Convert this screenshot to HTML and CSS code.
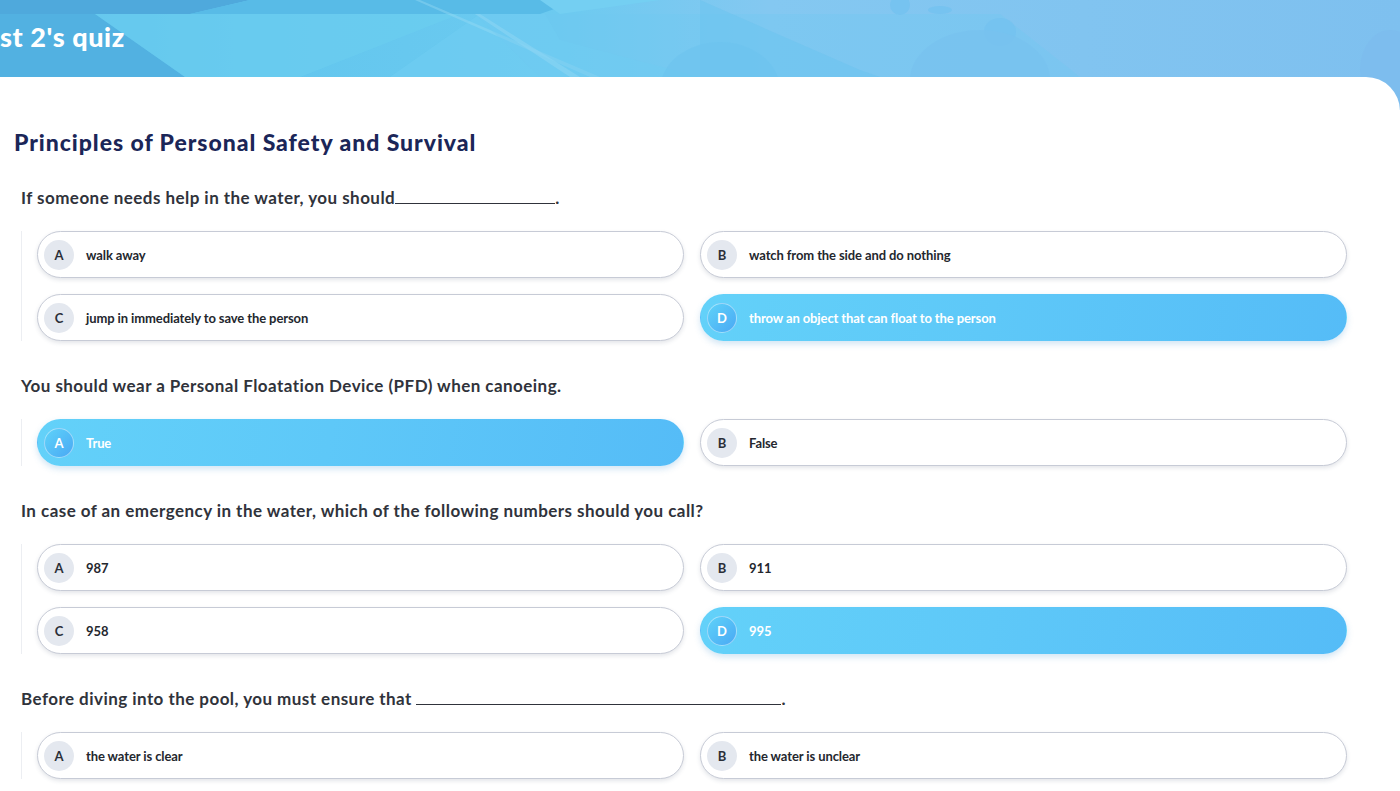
FILE: index.html
```html
<!DOCTYPE html>
<html lang="en">
<head>
<meta charset="utf-8">
<title>Quiz</title>
<link rel="stylesheet" href="styles.css">
</head>
<body>
<header class="banner">
  <svg class="banner-art" width="1400" height="110" viewBox="0 0 1400 110" preserveAspectRatio="none" aria-hidden="true">
    <rect x="0" y="0" width="1400" height="110" fill="url(#bg)"/>
    <defs>
      <linearGradient id="bg" x1="0" y1="0" x2="1" y2="0">
        <stop offset="0" stop-color="#55b7e5"/>
        <stop offset="0.18" stop-color="#62c6ee"/>
        <stop offset="0.4" stop-color="#6ccaf0"/>
        <stop offset="0.55" stop-color="#84c8f1"/>
        <stop offset="1" stop-color="#7ec0ef"/>
      </linearGradient>
    </defs>
    <polygon points="0,0 250,0 190,14 0,14" fill="#4fa9dc"/>
    <polygon points="0,14 95,14 185,77 0,77" fill="#52b1e1"/>
    <polygon points="95,14 460,14 300,77 185,77" fill="#6bcdf0" opacity="0.7"/>
    <polygon points="250,0 580,0 540,14 190,14" fill="#58bbe7"/>
    <polygon points="480,14 545,14 560,40 700,77 390,77" fill="#70cdf1" opacity="0.6"/>
    <polygon points="475,14 480,14 580,77 570,77" fill="#9adcf5" opacity="0.6"/>
    <polygon points="415,0 420,0 600,77 590,77" fill="#9adcf5" opacity="0.4"/>
    <polygon points="475,14 1000,14 1080,77 540,77" fill="#6fc9f0" opacity="0.35"/>
    <polygon points="700,0 860,70 880,77 700,77" fill="#6ac4ef" opacity="0.5"/>
    <polygon points="540,0 660,0 560,14" fill="#74cff2"/>
    <ellipse cx="1000" cy="32" rx="16" ry="14" fill="#74c2ef" opacity="0.9"/>
    <ellipse cx="900" cy="5" rx="10" ry="10" fill="#74c2ef" opacity="0.9"/>
    <ellipse cx="940" cy="10" rx="12" ry="4" fill="#74c2ef" opacity="0.9"/>
    <ellipse cx="980" cy="80" rx="70" ry="50" fill="#78c2ef" opacity="0.8"/>
    <ellipse cx="720" cy="90" rx="60" ry="48" fill="#6dc3ef" opacity="0.6"/>
    <ellipse cx="1390" cy="70" rx="30" ry="40" fill="#7dbcee" opacity="0.8"/>
  </svg>
  <h1 class="quiz-title">st 2's quiz</h1>
</header>

<main class="card">
  <h2 class="section-title">Principles of Personal Safety and Survival</h2>

  <section class="question">
    <p class="q-text">If someone needs help in the water, you should<span class="blank blank-short"></span>.</p>
    <div class="options">
      <div class="option"><span class="letter">A</span><span class="label">walk away</span></div>
      <div class="option"><span class="letter">B</span><span class="label">watch from the side and do nothing</span></div>
      <div class="option"><span class="letter">C</span><span class="label">jump in immediately to save the person</span></div>
      <div class="option selected"><span class="letter">D</span><span class="label">throw an object that can float to the person</span></div>
    </div>
  </section>

  <section class="question">
    <p class="q-text">You should wear a Personal Floatation Device (PFD) when canoeing.</p>
    <div class="options">
      <div class="option selected"><span class="letter">A</span><span class="label">True</span></div>
      <div class="option"><span class="letter">B</span><span class="label">False</span></div>
    </div>
  </section>

  <section class="question">
    <p class="q-text">In case of an emergency in the water, which of the following numbers should you call?</p>
    <div class="options">
      <div class="option"><span class="letter">A</span><span class="label">987</span></div>
      <div class="option"><span class="letter">B</span><span class="label">911</span></div>
      <div class="option"><span class="letter">C</span><span class="label">958</span></div>
      <div class="option selected"><span class="letter">D</span><span class="label">995</span></div>
    </div>
  </section>

  <section class="question">
    <p class="q-text">Before diving into the pool, you must ensure that <span class="blank blank-long"></span>.</p>
    <div class="options">
      <div class="option"><span class="letter">A</span><span class="label">the water is clear</span></div>
      <div class="option"><span class="letter">B</span><span class="label">the water is unclear</span></div>
    </div>
  </section>
</main>
</body>
</html>
```

FILE: styles.css
```css
* { box-sizing: border-box; }

html, body {
  margin: 0;
  padding: 0;
  height: 791px;
  overflow: hidden;
  background: #ffffff;
  font-family: Lato, Roboto, "Noto Sans", "Liberation Sans", sans-serif;
}

.banner {
  position: relative;
  height: 110px;
  margin-bottom: -33px;
  overflow: hidden;
}

.banner-art {
  position: absolute;
  left: 0;
  top: 0;
  display: block;
}

.quiz-title {
  position: relative;
  margin: 0;
  padding: 20px 0 0 0;
  color: #ffffff;
  font-size: 27px;
  font-weight: 900;
  line-height: 34px;
  letter-spacing: 0.6px;
}

.card {
  position: relative;
  background: #ffffff;
  border-top-right-radius: 34px;
  padding: 50px 53px 40px 14px;
}

.section-title {
  margin: 0;
  font-size: 23px;
  line-height: 30px;
  font-weight: 900;
  color: #1b2658;
  letter-spacing: 0.95px;
}

.question {
  margin-top: 34px;
}

.section-title + .question {
  margin-top: 30px;
}

.q-text {
  margin: 0 0 22px 7px;
  font-size: 17px;
  line-height: 22px;
  font-weight: 700;
  color: #30333b;
  letter-spacing: 0.45px;
}

.blank {
  display: inline-block;
  border-bottom: 1.5px solid #30333b;
  height: 17px;
  vertical-align: baseline;
}

.blank-short { width: 160px; }
.blank-long { width: 365px; }

.options {
  margin-left: 7px;
  border-left: 1px solid #eceef2;
  padding-left: 15px;
  display: grid;
  grid-template-columns: 1fr 1fr;
  gap: 16px;
}

.option {
  height: 47px;
  border-radius: 24px;
  border: 1.5px solid #c7cbd6;
  background: #ffffff;
  box-shadow: 0 2px 4px rgba(60, 70, 100, 0.14);
  display: flex;
  align-items: center;
  padding-left: 6px;
  gap: 12px;
}

.letter {
  width: 30px;
  height: 30px;
  border-radius: 50%;
  background: #e4e8ef;
  display: flex;
  align-items: center;
  justify-content: center;
  font-size: 13px;
  font-weight: 700;
  color: #2b2f38;
  flex: none;
}

.label {
  font-size: 13px;
  font-weight: 700;
  color: #24272e;
  letter-spacing: -0.1px;
}

.option.selected {
  border-color: transparent;
  background: linear-gradient(100deg, #63d1f9 0%, #5ec8f8 45%, #55bcf7 100%);
  box-shadow: 0 3px 6px rgba(70, 150, 210, 0.25);
}

.option.selected .letter {
  background: linear-gradient(135deg, #5ed2f9 0%, #4aa9f4 100%);
  border: 1.5px solid rgba(255, 255, 255, 0.45);
  color: #ffffff;
}

.option.selected .label {
  color: #ffffff;
}
```
